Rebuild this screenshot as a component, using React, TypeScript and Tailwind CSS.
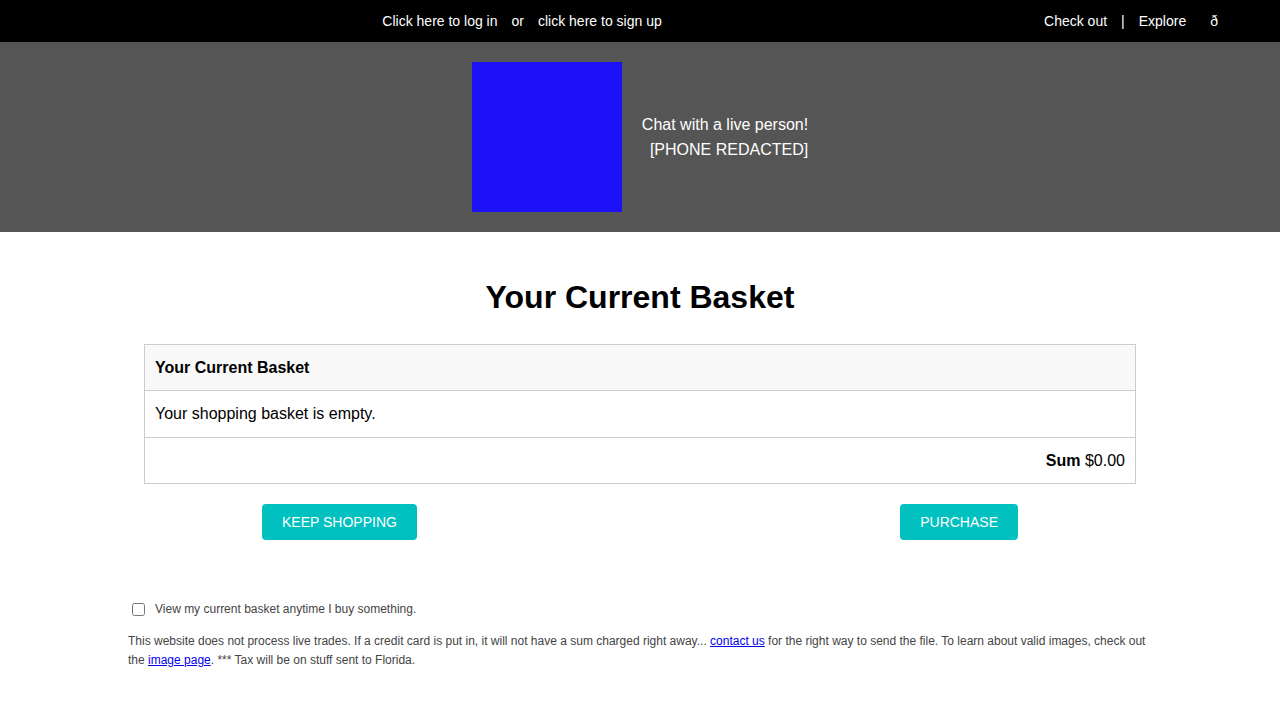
const topLinks = "flex items-center gap-3.5";
const actionButton =
  "h-9 cursor-pointer rounded-sm bg-[#00c0c0] px-5 text-sm text-white uppercase";
const cell = "border border-[#ccc] px-2.5 py-2.5";

export default function App() {
  return (
    <div className="min-h-screen bg-white font-['Liberation_Sans',Arial,sans-serif] text-base text-black">
      <nav className="flex items-center bg-black py-2.5 text-sm leading-[22px] text-white">
        <div className={`${topLinks} flex-1 justify-center`}>
          <a href="#login">Click here to log in</a>
          <span>or</span>
          <a href="#signup">click here to sign up</a>
        </div>
        <div className={`${topLinks} pr-[62px]`}>
          <a href="#checkout">Check out</a>
          <span>|</span>
          <a href="#explore">Explore</a>
          <a href="#basket" className="pl-2.5">ð</a>
        </div>
      </nav>

      <header className="flex items-center justify-center gap-5 bg-[#555] py-5 text-white">
        <div className="size-[150px] bg-[#1c10f7]" role="img" aria-label="Logo" />
        <div className="text-right leading-[25px]">
          <p>Chat with a live person!</p>
          <p>[PHONE REDACTED]</p>
        </div>
      </header>

      <main className="mx-auto w-4/5 pt-10">
        <section className="px-4">
          <h1 className="text-center text-[32px] leading-[50px] font-bold">Your Current Basket</h1>
          <table className="mt-[22px] h-[140px] w-full border-collapse border border-[#ccc] leading-[25px]">
            <thead>
              <tr>
                <th className={`${cell} bg-[#f9f9f9] text-left font-bold`}>Your Current Basket</th>
              </tr>
            </thead>
            <tbody>
              <tr>
                <td className={cell}>Your shopping basket is empty.</td>
              </tr>
              <tr>
                <td className={`${cell} text-right`}>
                  <strong>Sum</strong> $0.00
                </td>
              </tr>
            </tbody>
          </table>
          <div className="mt-5 flex justify-between px-[118px]">
            <button type="button" className={actionButton}>Keep shopping</button>
            <button type="button" className={actionButton}>Purchase</button>
          </div>
        </section>

        <footer className="mt-[60px] pb-10 text-xs leading-[19px] text-[#444]">
          <div className="flex items-center gap-2.5 pl-1">
            <input id="view-basket" type="checkbox" className="size-[13px]" />
            <label htmlFor="view-basket">View my current basket anytime I buy something.</label>
          </div>
          <p className="mt-[13px]">
            This website does not process live trades. If a credit card is put in, it will not have a sum
            charged right away...{" "}
            <a href="#contact" className="text-[#0000ee] underline">contact us</a> for the right way to send
            the file. To learn about valid images, check out the{" "}
            <a href="#images" className="text-[#0000ee] underline">image page</a>. *** Tax will be on stuff
            sent to Florida.
          </p>
        </footer>
      </main>
    </div>
  );
}
